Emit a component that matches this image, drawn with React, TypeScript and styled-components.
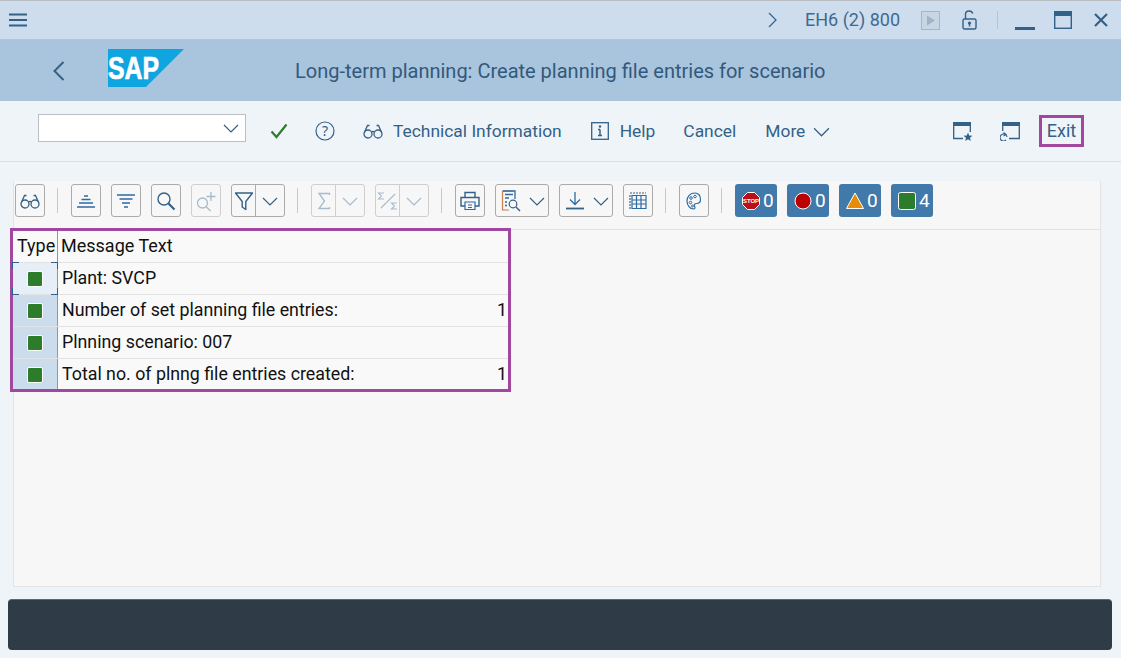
import React from 'react'
import styled, { createGlobalStyle } from 'styled-components'

const Global = createGlobalStyle`
  html, body { margin: 0; padding: 0; background: #eff4f9; }
  body { font-family: Roboto, "Noto Sans", sans-serif; overflow: hidden; }
`

const Shell = styled.div`
  width: 1121px;
  height: 658px;
  display: flex;
  flex-direction: column;
  background: #eff4f9;
`

const TitleBar = styled.div`
  height: 38px;
  flex: none;
  display: flex;
  align-items: center;
  padding: 0 13px 0 9px;
  background: #cddded;
  border-top: 1px solid #b9bdc1;
  border-bottom: 1px solid #b4c4d4;
  color: #346187;
`

const Spacer = styled.div`
  flex: 1;
`

const SystemName = styled.span`
  font-size: 18px;
  line-height: 20px;
  margin: 0 21px 0 28px;
  color: #3f6a90;
`

const Divider = styled.div`
  width: 1px;
  height: 18px;
  margin: 0 17px 0 20px;
  background: #b4c4d4;
`

const WindowIcon = styled.svg<{ $after?: number }>`
  display: block;
  flex: none;
  margin-right: ${p => p.$after ?? 0}px;
`

const Header = styled.div`
  height: 61px;
  flex: none;
  display: flex;
  align-items: center;
  padding-left: 53px;
  background: #a9c4dd;
`

const Logo = styled.svg`
  display: block;
  margin: -6px 111px 0 43px;
`

const PageTitle = styled.h1`
  margin: 1px 0 0;
  font-size: 20px;
  font-weight: 400;
  line-height: 24px;
  color: #32597b;
  white-space: nowrap;
`

const ActionBar = styled.div`
  height: 60px;
  flex: none;
  display: flex;
  align-items: center;
  padding: 0 37px 0 38px;
  border-bottom: 1px solid #d8e1ea;
`

const Combo = styled.div`
  width: 208px;
  height: 28px;
  box-sizing: border-box;
  margin: -6px 24px 0 0;
  display: flex;
  align-items: center;
  justify-content: flex-end;
  padding-right: 6px;
  background: #fff;
  border: 1px solid #b8bfc6;
`

const Action = styled.span<{ $after?: number }>`
  font-size: 17.4px;
  line-height: 24px;
  color: #346187;
  white-space: nowrap;
  margin-right: ${p => p.$after ?? 0}px;
`

const ExitBox = styled.div`
  width: 45px;
  height: 32px;
  box-sizing: border-box;
  margin-left: 19px;
  padding-bottom: 2px;
  display: flex;
  align-items: center;
  justify-content: center;
  border: 3px solid #a2479f;
  font-size: 18px;
  color: #346187;
`

const Panel = styled.div`
  width: 1088px;
  height: 406px;
  box-sizing: border-box;
  margin: 19px 0 0 13px;
  display: flex;
  flex-direction: column;
  background: #f7f7f7;
  border: 1px solid #e3e3e3;
  border-top: 0;
`

const Tools = styled.div`
  height: 49px;
  flex: none;
  box-sizing: border-box;
  padding-top: 3px;
  padding-left: 1px;
  display: flex;
  align-items: flex-start;
  gap: 10px;
  border-bottom: 1px solid #e3e3e3;
`

const ToolButton = styled.div<{ $off?: boolean }>`
  width: 30px;
  height: 33px;
  box-sizing: border-box;
  display: flex;
  align-items: center;
  justify-content: center;
  border: 1px solid ${p => (p.$off ? '#cfcfcf' : '#ababab')};
  border-radius: 3px;
`

const SplitButton = styled.div<{ $off?: boolean; $w: number; $wide: number }>`
  width: ${p => p.$w}px;
  height: 33px;
  box-sizing: border-box;
  display: grid;
  grid-template-columns: ${p => p.$wide}px 1fr;
  align-items: center;
  justify-items: center;
  border: 1px solid ${p => (p.$off ? '#cfcfcf' : '#ababab')};
  border-radius: 3px;
`

const SplitPart = styled.div<{ $off?: boolean; $line?: boolean }>`
  height: 31px;
  width: 100%;
  display: flex;
  align-items: center;
  justify-content: center;
  border-right: ${p => (p.$line ? `1px solid ${p.$off ? '#cfcfcf' : '#ababab'}` : '0')};
  box-sizing: border-box;
`

const ToolSep = styled.div`
  width: 1px;
  height: 25px;
  margin: 4px 3px 0 2px;
  background: #c9c9c9;
`

const StatusButton = styled.div`
  width: 42px;
  height: 33px;
  box-sizing: border-box;
  padding-left: 7px;
  display: flex;
  align-items: center;
  gap: 3px;
  background: #4279ab;
  border-radius: 3px;
  color: #fff;
  font-size: 19px;
`

const GridFrame = styled.div`
  width: 501px;
  box-sizing: border-box;
  margin: -2px 0 0 -4px;
  border: 3px solid #a2479f;
  background: #f9f9f9;
  color: #111;
  position: relative;
`

const GridRow = styled.div`
  height: 32px;
  box-sizing: border-box;
  display: grid;
  grid-template-columns: 45px 1fr;
  border-bottom: 1px solid #e2e2e2;
  font-size: 17.8px;
  &:last-child {
    height: 30px;
    border-bottom: 0;
  }
`

const TypeHead = styled.div`
  padding-left: 4px;
  line-height: 29px;
  font-size: 18px;
  border-right: 1px solid #8f98a1;
  white-space: nowrap;
`

const NameHead = styled.div`
  padding-left: 3px;
  line-height: 29px;
  font-size: 18px;
`

const TypeCell = styled.div<{ $current?: boolean }>`
  display: flex;
  align-items: flex-start;
  justify-content: center;
  padding-top: 8px;
  box-sizing: border-box;
  background: ${p => (p.$current ? '#e6eef7' : '#cbdded')};
  border-right: 1px solid #8f98a1;
  position: relative;
`

const Corner = styled.i<{ $v: 'top' | 'bottom'; $h: 'left' | 'right' }>`
  position: absolute;
  width: 6px;
  height: 6px;
  ${p => p.$v}: -1px;
  ${p => p.$h}: -1px;
  border-${p => p.$v}: 1px solid #2f5f8c;
  border-${p => p.$h}: 1px solid #2f5f8c;
`

const Square = styled.div`
  width: 16px;
  height: 16px;
  box-sizing: border-box;
  background: #2b7d2b;
  border: 1px solid #fff;
  border-radius: 2px;
`

const MessageCell = styled.div`
  display: flex;
  align-items: flex-start;
  justify-content: space-between;
  padding: 0 1px 0 4px;
  line-height: 30px;
  white-space: nowrap;
`

const Footer = styled.div`
  height: 51px;
  margin: 12px 9px 0 8px;
  background: #2f3c48;
  border-top: 1px solid #5b6670;
  box-sizing: border-box;
  border-radius: 4px;
`

const blue = '#346187'
const line = '#2e6ba3'
const off = '#a5bccf'

type IconProps = { c?: string; s?: number }

const Chevron = ({ c = blue, s = 16 }: IconProps) => (
  <svg width={s} height={s} viewBox="0 0 16 16" fill="none" style={{ display: 'block' }}>
    <path d="M1 5l7 7 7-7" stroke={c} strokeWidth="1.2" />
  </svg>
)

const Glasses = ({ c = blue, s = 20 }: IconProps) => (
  <svg width={s} height={s} viewBox="0 0 20 20" fill="none" style={{ display: 'block' }}>
    <circle cx="5" cy="13" r="4" stroke={c} strokeWidth="1.3" />
    <circle cx="15" cy="13" r="4" stroke={c} strokeWidth="1.3" />
    <path d="M8.5 11c1-.8 2-.8 3 0M1.4 11.5L4.5 4.5H6.5M18.6 11.5L15.5 4.5H13.5" stroke={c} strokeWidth="1.3" />
  </svg>
)

const AlignTop = () => (
  <svg width="20" height="16" viewBox="0 0 20 16" fill="none">
    <path d="M8 3h4M5.5 6.5h9M3 10h14M1 14h18" stroke={line} strokeWidth="1.3" />
  </svg>
)

const AlignDown = () => (
  <svg width="20" height="16" viewBox="0 0 20 16" fill="none">
    <path d="M1 2h18M3.5 6h13M6 10h8M8 14h4" stroke={line} strokeWidth="1.3" />
  </svg>
)

const Magnifier = ({ c = blue }: IconProps) => (
  <svg width="20" height="20" viewBox="0 0 20 20" fill="none">
    <circle cx="8" cy="8" r="6" stroke={c} strokeWidth="1.4" />
    <path d="M12.5 12.5L18.5 18.5" stroke={c} strokeWidth="2.2" />
  </svg>
)

const MagnifierPlus = () => (
  <svg width="22" height="22" viewBox="0 0 22 22" fill="none">
    <circle cx="7.5" cy="13" r="5" stroke={off} strokeWidth="1.3" />
    <path d="M11 16.5L15.5 21M16 2v9M11.5 6.5h9" stroke={off} strokeWidth="1.3" />
  </svg>
)

const Funnel = () => (
  <svg width="20" height="20" viewBox="0 0 20 20" fill="none">
    <path d="M1.5 2h17L11.8 10.5V18.5L8.2 16V10.5z" stroke={blue} strokeWidth="1.4" strokeLinejoin="round" />
  </svg>
)

const Sigma = () => (
  <svg width="14" height="18" viewBox="0 0 14 18" fill="none">
    <path d="M12.5 3V1.500H2L7.500 9 2 16.500H12.500V15" stroke={off} strokeWidth="1.3" />
  </svg>
)

const SigmaRatio = () => (
  <svg width="22" height="20" viewBox="0 0 22 20" fill="none">
    <path d="M7 2H1.500L4.500 5 1.500 8H7M20 12h-5.500l3 3-3 3H20M4 17L18 3" stroke={off} strokeWidth="1.1" />
  </svg>
)

const Printer = () => (
  <svg width="20" height="20" viewBox="0 0 20 20" fill="none">
    <path d="M5 6V1.500h10V6M5 15H1V6.500h18V15h-4" stroke={blue} strokeWidth="1.4" />
    <path d="M5 11h10v7.500H5zM8 14h4M8 16.500h4" stroke={line} strokeWidth="1.2" />
  </svg>
)

const Report = () => (
  <svg width="20" height="22" viewBox="0 0 20 22" fill="none">
    <path d="M12 1H1.500v19H8" stroke="#c87f4a" strokeWidth="1.2" />
    <path d="M2 1h12v8M4 4.500h8M4 8h4M4 12h2M4 15.500h2" stroke={line} strokeWidth="1.3" />
    <circle cx="12" cy="14" r="3.800" stroke={blue} strokeWidth="1.2" />
    <path d="M15 17l4 4" stroke={blue} strokeWidth="1.4" />
  </svg>
)

const Download = () => (
  <svg width="20" height="20" viewBox="0 0 20 20" fill="none">
    <path d="M10 1v12M5 8.500l5 5 5-5" stroke={line} strokeWidth="1.3" />
    <path d="M1 17.500h18" stroke={blue} strokeWidth="1.8" />
  </svg>
)

const Table = () => (
  <svg width="18" height="18" viewBox="0 0 18 18" fill="none">
    <path d="M1 1h16" stroke={blue} strokeWidth="1.2" strokeDasharray="2 1" />
    <path d="M3 3.500h14v13H3zM3 8h14M3 12h14M7.500 3.500v13M12 3.500v13" stroke={line} strokeWidth="1.2" />
    <path d="M1 3v14" stroke={blue} strokeWidth="1.2" strokeDasharray="2 1" />
  </svg>
)

const Palette = () => (
  <svg width="16" height="18" viewBox="0 0 16 18" fill="none">
    <path d="M9 1C4 1 1 4.500 1 9c0 4.500 3 8 6.500 8 2 0 1.500-2 1-3-.5-1.500.5-2.500 2-2.500 2.500 0 4-1 4-4C14.500 3.500 12.500 1 9 1z" stroke={line} strokeWidth="1.2" />
    <circle cx="5" cy="6" r="1.300" stroke={line} />
    <circle cx="9" cy="4.500" r="1.300" stroke={line} />
    <circle cx="4.500" cy="10.500" r="1.300" stroke={line} />
    <circle cx="6.500" cy="14" r="1" stroke={line} />
  </svg>
)

const StopSign = () => (
  <svg width="18" height="18" viewBox="0 0 18 18">
    <polygon points="5.500,.5 12.500,.5 17.500,5.500 17.500,12.500 12.500,17.500 5.500,17.500 .5,12.500 .5,5.500" fill="#bd0f16" stroke="#fff" />
    <text x="9" y="11" textAnchor="middle" fontSize="6" fontWeight="700" fill="#fff" fontFamily="Liberation Sans">STOP</text>
  </svg>
)

const RedDot = () => (
  <svg width="18" height="18" viewBox="0 0 18 18">
    <circle cx="9" cy="9" r="8" fill="#bb0000" stroke="#fff" />
  </svg>
)

const Warn = () => (
  <svg width="18" height="18" viewBox="0 0 18 18">
    <polygon points="9,1 17.500,16.500 .5,16.500" fill="#e78c07" stroke="#fff" />
  </svg>
)

const GreenBox = () => (
  <svg width="18" height="18" viewBox="0 0 18 18">
    <rect x=".5" y=".5" width="17" height="17" rx="2" fill="#2b7d2b" stroke="#fff" />
  </svg>
)

const rows = [
  { text: 'Plant: SVCP', current: true },
  { text: 'Number of set planning file entries:', count: '1' },
  { text: 'Plnning scenario: 007' },
  { text: 'Total no. of plnng file entries created:', count: '1' }
]

const App = () => (
  <Shell>
    <Global />
    <TitleBar>
      <WindowIcon width="18" height="14" viewBox="0 0 18 14" fill="none">
        <path d="M0 1.500h18M0 7h18M0 12.500h18" stroke={blue} strokeWidth="2" />
      </WindowIcon>
      <Spacer />
      <WindowIcon width="9" height="16" viewBox="0 0 9 16" fill="none">
        <path d="M1 1l7 7-7 7" stroke={blue} strokeWidth="1.2" />
      </WindowIcon>
      <SystemName>EH6 (2) 800</SystemName>
      <WindowIcon width="19" height="19" viewBox="0 0 19 19" fill="none" $after={22}>
        <rect x=".5" y=".5" width="18" height="18" stroke="#a3b7c9" fill="#c8d6e4" />
        <polygon points="6,4.500 14,9.500 6,14.500" fill="#9fb3c6" />
      </WindowIcon>
      <WindowIcon width="15" height="20" viewBox="0 0 15 20" fill="none">
        <rect x="1" y="9" width="13" height="10" rx="1.500" stroke={blue} strokeWidth="1.400" />
        <path d="M3.500 9V4.500C3.500 2.500 5 1 7 1s3.300 1 3.800 2.500" stroke={blue} strokeWidth="1.400" />
        <circle cx="7.500" cy="13" r="1.600" fill={blue} />
        <path d="M7.500 13v3.500" stroke={blue} strokeWidth="1.400" />
      </WindowIcon>
      <Divider />
      <WindowIcon width="20" height="20" viewBox="0 0 20 20" fill="none" $after={19}>
        <path d="M0 18.500h20" stroke={blue} strokeWidth="3" />
      </WindowIcon>
      <WindowIcon width="18" height="18" viewBox="0 0 18 18" fill="none" $after={22}>
        <rect x=".7" y=".7" width="16.600" height="16.600" stroke={blue} strokeWidth="1.400" />
        <path d="M0 2.500h18" stroke={blue} strokeWidth="5" />
      </WindowIcon>
      <WindowIcon width="14" height="14" viewBox="0 0 14 14" fill="none">
        <path d="M1 1l12 12M13 1L1 13" stroke={blue} strokeWidth="2.200" />
      </WindowIcon>
    </TitleBar>

    <Header>
      <WindowIcon width="12" height="20" viewBox="0 0 12 20" fill="none">
        <path d="M10.500 1L1.500 10l9 9" stroke={blue} strokeWidth="2" />
      </WindowIcon>
      <Logo width="76" height="38" viewBox="0 0 76 38">
        <polygon points="0,0 76,0 38,38 0,38" fill="#0fa5e0" />
        <text x="0" y="30" fontFamily="Liberation Sans" fontWeight="700" fontSize="32" fill="#fff" stroke="#fff" strokeWidth=".7" textLength="51" lengthAdjust="spacingAndGlyphs">SAP</text>
      </Logo>
      <PageTitle>Long-term planning: Create planning file entries for scenario</PageTitle>
    </Header>

    <ActionBar>
      <Combo>
        <Chevron s={16} />
      </Combo>
      <WindowIcon width="18" height="16" viewBox="0 0 18 16" fill="none" $after={27}>
        <path d="M1.500 8.500L6.500 14 16.500 1.500" stroke="#2b7d2b" strokeWidth="2.200" />
      </WindowIcon>
      <WindowIcon width="20" height="20" viewBox="0 0 20 20" fill="none" $after={28}>
        <circle cx="10" cy="10" r="9" stroke={blue} strokeWidth="1.200" />
        <text x="10" y="15" textAnchor="middle" fontSize="14" fill={blue} fontFamily="Noto Sans">?</text>
      </WindowIcon>
      <WindowIcon as="div" $after={10}>
        <Glasses />
      </WindowIcon>
      <Action $after={29}>Technical Information</Action>
      <WindowIcon width="18" height="18" viewBox="0 0 18 18" fill="none" $after={11}>
        <rect x=".7" y=".7" width="16.600" height="16.600" stroke={blue} strokeWidth="1.300" />
        <path d="M9 7.500v6M7 13.500h4M7 7.500h2" stroke={blue} strokeWidth="1.500" />
        <circle cx="9" cy="4.500" r="1.200" fill={blue} />
      </WindowIcon>
      <Action $after={28}>Help</Action>
      <Action $after={29}>Cancel</Action>
      <Action $after={8}>More</Action>
      <Chevron s={17} />
      <Spacer />
      <WindowIcon width="20" height="20" viewBox="0 0 20 20" fill="none" $after={27}>
        <path d="M0 1h18v4H0z" fill={blue} />
        <path d="M.7 1v16.500H10M17.300 1v10" stroke={blue} strokeWidth="1.300" />
        <polygon points="15,11.500 16.200,14.600 19.500,14.800 17,16.800 17.800,20 15,18.200 12.200,20 13,16.800 10.500,14.800 13.800,14.600" fill={blue} />
      </WindowIcon>
      <WindowIcon width="20" height="20" viewBox="0 0 20 20" fill="none">
        <path d="M2 1h18v4H2z" fill={blue} />
        <path d="M2.700 1v9M19.300 1v16.500H9" stroke={blue} strokeWidth="1.300" />
        <path d="M7 16a3.500 3.500 0 1 0-1 3M3.500 11.500l2.500 2-2.500 1.500" stroke={blue} strokeWidth="1.200" />
      </WindowIcon>
      <ExitBox>Exit</ExitBox>
    </ActionBar>

    <Panel>
      <Tools>
        <ToolButton><Glasses s={20} /></ToolButton>
        <ToolSep />
        <ToolButton><AlignTop /></ToolButton>
        <ToolButton><AlignDown /></ToolButton>
        <ToolButton><Magnifier /></ToolButton>
        <ToolButton $off><MagnifierPlus /></ToolButton>
        <SplitButton $w={54} $wide={24}>
          <SplitPart $line><Funnel /></SplitPart>
          <SplitPart><Chevron s={16} /></SplitPart>
        </SplitButton>
        <ToolSep />
        <SplitButton $off $w={54} $wide={24}>
          <SplitPart $off $line><Sigma /></SplitPart>
          <SplitPart><Chevron c={off} s={16} /></SplitPart>
        </SplitButton>
        <SplitButton $off $w={54} $wide={24}>
          <SplitPart $off $line><SigmaRatio /></SplitPart>
          <SplitPart><Chevron c={off} s={16} /></SplitPart>
        </SplitButton>
        <ToolSep />
        <ToolButton><Printer /></ToolButton>
        <SplitButton $w={54} $wide={30}>
          <SplitPart><Report /></SplitPart>
          <SplitPart><Chevron s={16} /></SplitPart>
        </SplitButton>
        <SplitButton $w={54} $wide={30}>
          <SplitPart><Download /></SplitPart>
          <SplitPart><Chevron s={16} /></SplitPart>
        </SplitButton>
        <ToolButton><Table /></ToolButton>
        <ToolSep />
        <ToolButton><Palette /></ToolButton>
        <ToolSep />
        <StatusButton><StopSign />0</StatusButton>
        <StatusButton><RedDot />0</StatusButton>
        <StatusButton><Warn />0</StatusButton>
        <StatusButton><GreenBox />4</StatusButton>
      </Tools>
      <GridFrame>
        <GridRow>
          <TypeHead>Type</TypeHead>
          <NameHead>Message Text</NameHead>
        </GridRow>
        {rows.map(row => (
          <GridRow key={row.text}>
            <TypeCell $current={row.current}>
              {row.current && (
                <>
                  <Corner $v="top" $h="left" />
                  <Corner $v="top" $h="right" />
                  <Corner $v="bottom" $h="left" />
                  <Corner $v="bottom" $h="right" />
                </>
              )}
              <Square />
            </TypeCell>
            <MessageCell>
              <span>{row.text}</span>
              {row.count && <span>{row.count}</span>}
            </MessageCell>
          </GridRow>
        ))}
      </GridFrame>
    </Panel>
    <Footer />
  </Shell>
)

export default App
